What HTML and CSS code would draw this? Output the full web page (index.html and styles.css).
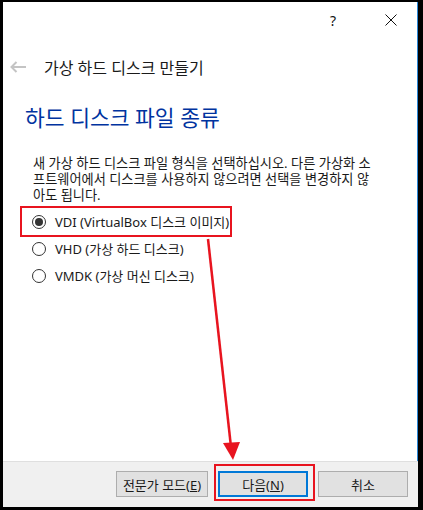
FILE: index.html
```html
<!DOCTYPE html>
<html lang="ko">
<head>
    <meta charset="UTF-8">
    <title>가상 하드 디스크 만들기</title>
    <link rel="stylesheet" href="styles.css">
</head>
<body>
    <div class="window">
        <!-- Caption buttons -->
        <div class="titlebar">
            <span class="caption-btn help">?</span>
            <span class="caption-btn close">
                <svg width="12" height="12" viewBox="0 0 12 12"><path d="M0.5 0.5 L11.5 11.5 M11.5 0.5 L0.5 11.5" stroke="#111" stroke-width="1" fill="none"/></svg>
            </span>
        </div>

        <!-- Wizard header -->
        <div class="header">
            <svg class="back" width="17" height="12" viewBox="0 0 17 12"><path d="M1.5 6 H16 M6.5 1 L1.5 6 L6.5 11" stroke="#c4c4c4" stroke-width="2" fill="none"/></svg>
            <span class="title">가상 하드 디스크 만들기</span>
        </div>

        <div class="content">
            <h2 class="heading">하드 디스크 파일 종류</h2>
            <p class="desc">새 가상 하드 디스크 파일 형식을 선택하십시오. 다른 가상화 소<br>프트웨어에서 디스크를 사용하지 않으려면 선택을 변경하지 않<br>아도 됩니다.</p>
            <div class="options">
                <label class="option"><span class="radio checked"></span>VDI (VirtualBox 디스크 이미지)</label>
                <label class="option"><span class="radio"></span>VHD (가상 하드 디스크)</label>
                <label class="option"><span class="radio"></span>VMDK (가상 머신 디스크)</label>
            </div>
        </div>

        <!-- Button bar -->
        <div class="footer">
            <button class="btn wide">전문가 모드(<u>E</u>)</button>
            <button class="btn default">다음(<u>N</u>)</button>
            <button class="btn">취소</button>
        </div>
    </div>

    <!-- Red annotation drawn over the dialog -->
    <svg class="annotation" width="423" height="510" viewBox="0 0 423 510">
        <rect x="21" y="207" width="210" height="29" fill="none" stroke="#e8141f" stroke-width="2"/>
        <rect x="215" y="465" width="99" height="35" fill="none" stroke="#e8141f" stroke-width="2"/>
        <line x1="208" y1="239" x2="231" y2="447" stroke="#e8141f" stroke-width="2.5"/>
        <polygon points="223,443 240,442 233,460" fill="#e8141f"/>
    </svg>
</body>
</html>
```

FILE: styles.css
```css
* {
    margin: 0;
    padding: 0;
    box-sizing: border-box;
}
body {
    position: relative;
    width: 423px;
    height: 510px;
    font-family: 'Noto Sans', 'Noto Sans CJK KR', sans-serif;
    color: #1a1a1a;
    background: #000;
}
.window {
    width: 423px;
    height: 510px;
    display: flex;
    flex-direction: column;
    background: #fff;
    border-top: 2px solid #000;
    border-left: 3px solid #000;
    border-right: 5px solid #000;
    border-bottom: 3px solid #000;
    box-shadow: inset -1px 0 0 #2b88d8;
}
/* Caption buttons */
.titlebar {
    height: 36px;
    display: flex;
    justify-content: flex-end;
    align-items: center;
    padding-right: 4px;
    gap: 12px;
}
.caption-btn {
    width: 46px;
    display: flex;
    justify-content: center;
    align-items: center;
    font-size: 14px;
    color: #111;
}
/* Wizard header */
.header {
    display: flex;
    align-items: center;
    height: 30px;
    margin-top: 14px;
    padding-left: 7px;
}
.back {
    margin-right: 17px;
}
.title {
    font-size: 16px;
    color: #1a1a1a;
}
.content {
    flex: 1;
    padding-left: 22px;
}
.heading {
    font-size: 21.5px;
    font-weight: normal;
    line-height: 28px;
    color: #0033a0;
    margin-top: 22px;
}
.desc {
    font-size: 13.2px;
    line-height: 16px;
    margin-top: 23px;
    padding-left: 8px;
    color: #1a1a1a;
}
.options {
    margin-top: 5px;
    display: flex;
    flex-direction: column;
}
.option {
    height: 27px;
    display: flex;
    align-items: center;
    padding-left: 7px;
    font-size: 13px;
    color: #1a1a1a;
}
.radio {
    width: 14px;
    height: 14px;
    border: 1px solid #333;
    border-radius: 50%;
    margin-right: 9px;
    display: flex;
    justify-content: center;
    align-items: center;
    background: #fff;
}
.radio.checked::after {
    content: "";
    width: 8px;
    height: 8px;
    border-radius: 50%;
    background: #333;
}
/* Button bar */
.footer {
    height: 46px;
    background: #f0f0f0;
    border-top: 1px solid #dfdfdf;
    display: flex;
    justify-content: flex-end;
    align-items: flex-start;
    gap: 10px;
    padding: 9px 10px 0 0;
}
.btn {
    width: 90px;
    height: 26px;
    background: #e1e1e1;
    border: 1px solid #adadad;
    font-family: inherit;
    font-size: 13px;
    color: #1a1a1a;
}
.btn.wide {
    width: 92px;
}
.btn.default {
    border: 2px solid #0078d7;
}
.annotation {
    position: absolute;
    top: 0;
    left: 0;
    pointer-events: none;
}
```
